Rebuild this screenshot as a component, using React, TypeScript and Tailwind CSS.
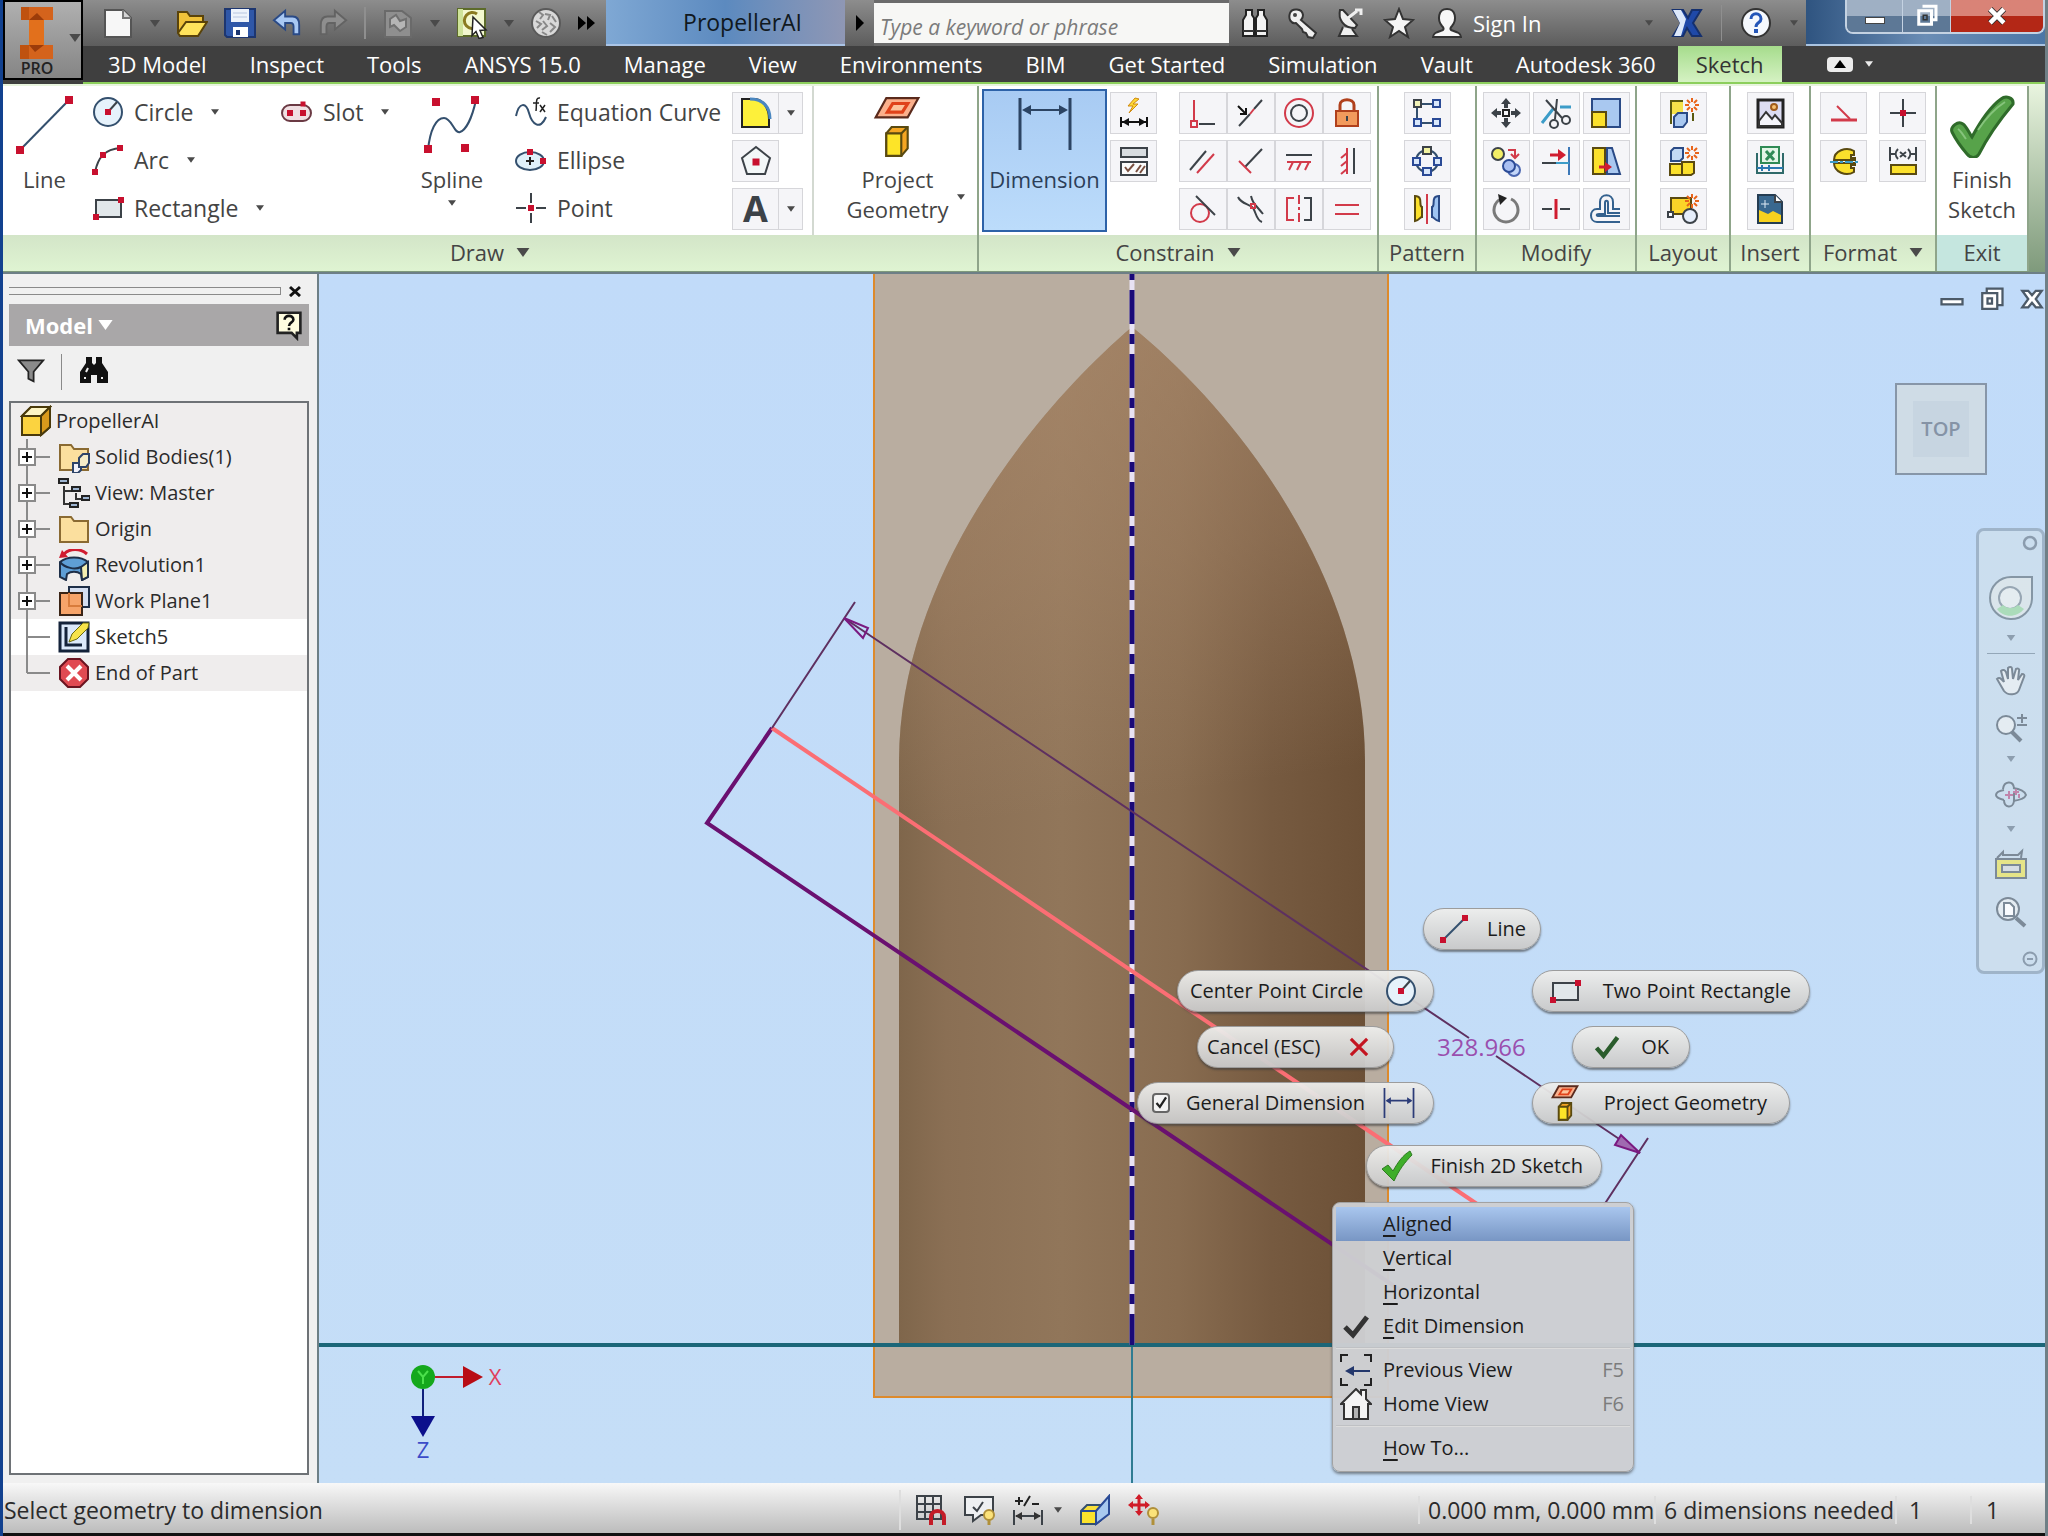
import { Fragment, type ReactNode } from 'react'
import clsx from 'clsx'

type IconProps = { className?: string; box?: string; children?: ReactNode }

function Icon({ className = 'w-8 h-8', box = '0 0 32 32', children }: IconProps) {
  return (
    <svg className={clsx('shrink-0', className)} viewBox={box} fill="none" stroke="#3c4248" strokeWidth="2" aria-hidden="true">
      {children}
    </svg>
  )
}

function Caret({ className = 'w-[10px] h-[7px]', color = '#4a4a4a' }: { className?: string; color?: string }) {
  return (
    <svg className={clsx('shrink-0', className)} viewBox="0 0 10 7" fill={color} aria-hidden="true">
      <path d="M0 0h10L5 7z" />
    </svg>
  )
}

// Small red handle used on most sketch icons
function Dot({ x, y, s = 6 }: { x: number; y: number; s?: number }) {
  return <rect x={x - s / 2} y={y - s / 2} width={s} height={s} fill="#c8102e" stroke="none" />
}

/* ---------- shared drawings ---------- */

const lineIcon = (
  <>
    <path d="M5 27L27 5" stroke="#34506e" />
    <Dot x={5} y={27} />
    <Dot x={27} y={5} />
  </>
)

const circleIcon = (
  <>
    <circle cx="16" cy="16" r="14" fill="#e6f2fb" stroke="#34506e" />
    <path d="M16 16L25 6" stroke="#3c4248" />
    <Dot x={16} y={16} />
  </>
)

const rectIcon = (
  <>
    <rect x="4" y="8" width="25" height="17" fill="#e1e7ea" />
    <Dot x={4} y={25} />
    <Dot x={29} y={8} />
  </>
)

const geometryIcon = (
  <>
    <path d="M12 2h30l-10 18H2z" fill="#fbb08c" stroke="#5a2a1c" />
    <path d="M18 7h14l-5 8H13z" fill="#fdc39b" stroke="#e0421a" strokeWidth="3" />
    <path d="M12 35l5-6h15v20l-6 7H12z" fill="#f5a623" stroke="#5a4a10" />
    <path d="M12 35h14v21H12z" fill="#fde428" stroke="#5a4a10" />
    <path d="M26 35l6-6" stroke="#5a4a10" />
  </>
)

const dimensionIcon = (
  <>
    <path d="M4 2v52M54 2v52" stroke="#2c4463" strokeWidth="3" />
    <path d="M8 14h42" stroke="#2c4463" strokeWidth="2" />
    <path d="M6 14l9-5v10zM52 14l-9-5v10z" fill="#2c4463" stroke="none" />
  </>
)

const sun = (
  <path
    d="M25 1v4M25 11v4M18 8h4M28 8h4M20 3l3 3M27 10l3 3M30 3l-3 3M23 10l-3 3"
    stroke="#e8641a"
    strokeWidth="2"
  />
)

/* ---------- title bar ---------- */

function QuickAccess() {
  return (
    <div className="flex items-center gap-4 pl-[19px] pr-[10px] bg-linear-to-b from-[#8d8d8d] to-[#5d5d5d]">
      <button aria-label="New">
        <Icon>
          <path d="M3 3h18l8 8v19H3z" fill="#f7f7f7" stroke="#555" />
          <path d="M21 3v8h8" fill="#d5d5d5" stroke="#777" />
        </Icon>
      </button>
      <Caret />
      <button aria-label="Open">
        <Icon>
          <path d="M2 26V5h9l3 4h13v5" fill="#f0c23a" stroke="#5a430a" />
          <path d="M2 26l8-11h21l-9 14H4z" fill="#ffe35c" stroke="#5a430a" />
        </Icon>
      </button>
      <button aria-label="Save">
        <Icon>
          <path d="M1 2h30v28H3l-2-2z" fill="#2f57a8" stroke="#1d3670" />
          <path d="M7 2h18v13H7z" fill="#eef3fb" stroke="none" />
          <path d="M9 6h14M9 10h14" stroke="#b8c6e0" strokeWidth="1" />
          <path d="M9 20h15v10H9z" fill="#fff" stroke="none" />
          <path d="M12 23h4v5h-4z" fill="#1d3670" stroke="none" />
        </Icon>
      </button>
      <button aria-label="Undo">
        <Icon className="w-[30px] h-8">
          <path d="M2 13L14 3v6h8c5 0 7 4 7 9v10h-6V20c0-2-1-4-3-4h-6v7z" fill="#a8c8f4" stroke="#2a4a86" />
        </Icon>
      </button>
      <button aria-label="Redo">
        <Icon className="w-[30px] h-8">
          <path d="M30 13L18 3v6h-8c-5 0-7 4-7 9v10h6V20c0-2 1-4 3-4h6v7z" fill="#8e8e8e" stroke="#636363" />
        </Icon>
      </button>
      <div className="w-[2px] h-8 bg-[#8f8f8f]" />
      <button aria-label="Update">
        <Icon>
          <path d="M3 4h17l9 7v19H3z" fill="#8f8f8f" stroke="#6a6a6a" />
          <path d="M8 12l6-4 4 6 6-2v8l-6 4-6-6-4 2z" fill="#b5b5b5" stroke="#707070" />
        </Icon>
      </button>
      <Caret />
      <button aria-label="Select">
        <Icon>
          <path d="M2 2h27v27H2z" fill="#f3f8cf" stroke="#5c6b2a" />
          <path d="M2 2h5v27H2z" fill="#cfe39a" stroke="none" />
          <path d="M21 7a8 8 0 1 0 0 13" stroke="#8a7a20" strokeWidth="3" />
          <path d="M17 10l13 13-6 .5 3 7-4 1-3-7-4 4z" fill="#fff" stroke="#222" strokeWidth="1.5" />
        </Icon>
      </button>
      <Caret />
      <button aria-label="Appearance">
        <Icon>
          <circle cx="16" cy="16" r="14" fill="#d9d9d9" stroke="#5a5a5a" />
          <path d="M9 5l4 3-3 4M15 7l5 1-2 5M22 9l4 6M6 14l5 3-4 4M13 14l4 5-5 4M20 16l5 4-5 5M12 25l5 3" stroke="#888" />
        </Icon>
      </button>
      <button aria-label="More">
        <svg className="w-[18px] h-4" viewBox="0 0 18 16" aria-hidden="true">
          <path d="M0 1l8 7-8 7zM9 1l8 7-8 7z" />
        </svg>
      </button>
    </div>
  )
}

function InfoCenter() {
  return (
    <div className="flex items-center gap-4 pl-[10px] pr-2 w-[577px] bg-linear-to-b from-[#8d8d8d] to-[#5d5d5d]">
      <button aria-label="Search">
        <Icon>
          <path d="M7 3h6v5l2 3v18H4V13l3-5zM19 3h6v5l3 5v16H17V11l2-3z" fill="#f2f2f2" stroke="#222" />
          <path d="M14 12h4v6h-4z" fill="#222" stroke="none" />
          <path d="M4 24h11M17 24h11" stroke="#333" />
        </Icon>
      </button>
      <button aria-label="Subscription">
        <Icon>
          <path d="M3 6c2-5 12-5 13 2 0 2-1 4-2 5l15 13-3 5-5-1-2-4-3-1-1-3-6-6C4 17 1 12 3 6z" fill="#f0f0f0" stroke="#333" />
          <circle cx="8" cy="8" r="2" fill="#444" stroke="none" />
        </Icon>
      </button>
      <button aria-label="Communication">
        <Icon>
          <path d="M5 3c-2 9 3 18 15 18l2-3L8 3z" fill="#f0f0f0" stroke="#333" />
          <path d="M13 11l9-7M20 3h6v5" stroke="#f0f0f0" strokeWidth="3" />
          <path d="M8 20l-4 9h18l-5-7" fill="#f0f0f0" stroke="#333" />
        </Icon>
      </button>
      <button aria-label="Favorites">
        <Icon>
          <path d="M16 2l4 10 10 1-8 7 3 10-9-6-9 6 3-10-8-7 10-1z" fill="#f5f5f5" stroke="#333" />
        </Icon>
      </button>
      <button className="flex items-center gap-[10px] text-white">
        <Icon>
          <path d="M2 30c0-4 4-5 10-7 1-1 0-3-1-4-5-6-4-17 5-17s10 11 5 17c-1 1-2 3-1 4 6 2 10 3 10 7z" fill="#f7f7f7" stroke="#333" />
        </Icon>
        Sign In
      </button>
      <div className="flex items-center gap-[18px] ml-auto">
        <Caret className="w-2 h-[6px]" />
        <button aria-label="Exchange">
          <Icon>
            <path d="M2 3h10l5 8 4-8h9l-8 13 8 13h-9l-5-8-4 8H2l8-13z" fill="#1f49a8" stroke="#15306e" />
            <path d="M2 3h8l5 9-5 17H3l6-13z" fill="#dce8fa" stroke="none" />
          </Icon>
        </button>
        <div className="w-px h-9 bg-[#8f8f8f]" />
        <button aria-label="Help">
          <Icon>
            <circle cx="16" cy="16" r="14" fill="#f5f8fd" stroke="#333" />
            <path d="M11 12c0-7 10-7 10 0 0 4-5 3-5 8" stroke="#2456b8" strokeWidth="3" />
            <path d="M14 22h4v4h-4z" fill="#2456b8" stroke="none" />
          </Icon>
        </button>
        <Caret className="w-2 h-[6px]" />
      </div>
    </div>
  )
}

function WindowButtons() {
  return (
    <div className="flex justify-end items-start w-[239px] border-b-2 border-[#a9c3e0] bg-linear-to-r from-[#2f5480] via-[#6a8db5] to-[#4c76a6]">
      <div className="flex h-[34px] rounded-b-lg border-2 border-t-0 border-[#c4d2e2] overflow-hidden">
        <button aria-label="Minimize" className="flex justify-center items-center w-14 bg-linear-to-b from-[#9fb0c4] from-50% to-[#5d7896] to-50% border-r border-[#c4d2e2]">
          <span className="w-5 h-[7px] mt-2 bg-white border border-[#444]" />
        </button>
        <button aria-label="Restore" className="flex justify-center items-center w-12 bg-linear-to-b from-[#9fb0c4] from-50% to-[#5d7896] to-50% border-r border-[#c4d2e2]">
          <Icon className="w-6 h-6">
            <path d="M10 3h18v18h-4" stroke="#fff" strokeWidth="4" />
            <path d="M5 9h17v18H5z" stroke="#fff" strokeWidth="4" />
            <path d="M11 15h5v6h-5z" stroke="#333" strokeWidth="2" />
          </Icon>
        </button>
        <button aria-label="Close" className="flex justify-center items-center w-[92px] bg-linear-to-b from-[#d98377] from-50% to-[#b32716] to-50%">
          <Icon className="w-5 h-5">
            <path d="M5 5l22 22M27 5L5 27" stroke="#333" strokeWidth="10" />
            <path d="M5 5l22 22M27 5L5 27" stroke="#fff" strokeWidth="7" />
          </Icon>
        </button>
      </div>
    </div>
  )
}

const tabs = [
  '3D Model', 'Inspect', 'Tools', 'ANSYS 15.0', 'Manage', 'View', 'Environments',
  'BIM', 'Get Started', 'Simulation', 'Vault', 'Autodesk 360',
]

function Header() {
  return (
    <header className="flex h-[84px] bg-[#3f3f3f]">
      <button aria-label="Application menu" className="flex w-20 h-20 border-2 border-black bg-linear-to-b from-[#b0b0b0] to-[#858585]">
        <span className="flex flex-col items-center w-[66px] h-full">
          <svg className="w-9 h-[54px] mt-1" viewBox="0 0 36 54" aria-hidden="true">
            <path d="M2 1h32v13H25v25h9v14H1V39h9V14H2z" fill="#d4631c" />
            <path d="M10 14h15v25H10z" fill="#e2701c" />
            <path d="M2 1h8v13H2zM1 39h9v14H1z" fill="#bf5210" />
            <path d="M10 14h15l-7-7zM10 39h15l-9 7z" fill="#9c3c0a" />
          </svg>
          <span className="text-base leading-4 font-semibold text-[#222]">PRO</span>
        </span>
        <Caret className="w-3 h-2 mt-8" />
      </button>
      <div className="flex-1 min-w-0">
        <div className="flex h-[46px]">
          <QuickAccess />
          <div className="flex items-center justify-end pr-[43px] w-[239px] border-b-2 border-[#aac4e6] bg-linear-to-r from-[#7fa8d4] via-[#5c8abf] to-[#8f97b4] text-[23px] text-[#101820]">
            PropellerAI
          </div>
          <button aria-label="Collapse search" className="flex justify-center items-center w-[29px] bg-linear-to-b from-[#8d8d8d] to-[#5d5d5d]">
            <svg className="w-2 h-4" viewBox="0 0 8 16" aria-hidden="true"><path d="M0 0l8 8-8 8z" /></svg>
          </button>
          <div className="flex-1 min-w-0 bg-[#6b6b6b] pt-[3px] pb-[3px]">
            <input
              type="text"
              aria-label="Search help"
              placeholder="Type a keyword or phrase"
              className="w-full h-10 px-[6px] pt-2 bg-[#f7f7f5] text-[21px] italic placeholder:text-[#7b7b7b]"
            />
          </div>
          <InfoCenter />
          <WindowButtons />
        </div>
        <nav className="flex items-center gap-px h-[38px] pl-1 border-b-2 border-[#8ccf5c] text-white">
          {tabs.map((t) => (
            <button key={t} className="px-[21px]">{t}</button>
          ))}
          <button className="self-stretch px-[18px] bg-linear-to-b from-[#a6dc8c] to-[#d5f2c3] text-[#333]">Sketch</button>
          <button aria-label="Minimize ribbon" className="flex items-center gap-3 ml-11">
            <span className="flex justify-center items-center w-[26px] h-[15px] rounded-sm bg-[#ececec]">
              <svg className="w-3 h-2" viewBox="0 0 12 8" aria-hidden="true"><path d="M6 0l6 8H0z" /></svg>
            </span>
            <Caret className="w-2 h-[6px]" color="#ececec" />
          </button>
        </nav>
      </div>
    </header>
  )
}

/* ---------- ribbon ---------- */

type GroupProps = { label: string; caret?: boolean; className?: string; exit?: boolean; children: ReactNode }

function Group({ label, caret, className, exit, children }: GroupProps) {
  return (
    <section className={clsx('flex flex-col border-r-2 border-[#8fa58a]', className)}>
      <div className="flex h-[149px] bg-white">{children}</div>
      <div
        className={clsx(
          'flex justify-center items-center gap-3 h-9 pb-[2px]',
          exit ? 'bg-[#c5e6df]' : 'bg-linear-to-b from-[#d3e5c8] to-[#dff4d2]',
        )}
      >
        {label}
        {caret && <Caret className="w-[14px] h-[9px]" />}
      </div>
    </section>
  )
}

function Tool({ name, children, wide }: { name: string; children: ReactNode; wide?: boolean }) {
  return (
    <button
      aria-label={name}
      className={clsx('flex justify-center items-center h-[42px] border border-[#d6d6da] bg-[#f5f5f8]', wide ? 'w-12' : 'w-[47px]')}
    >
      {children}
    </button>
  )
}

function CaretTool({ name }: { name: string }) {
  return (
    <button aria-label={name} className="flex justify-center items-center w-6 h-[42px] border border-l-0 border-[#d6d6da] bg-[#f5f5f8]">
      <Caret className="w-2 h-[6px]" />
    </button>
  )
}

function RowTool({ label, caret, children }: { label: string; caret?: boolean; children: ReactNode }) {
  return (
    <button className="flex items-center h-12 text-[23px]">
      {children}
      <span className="ml-[10px]">{label}</span>
      {caret && <Caret className="w-2 h-[6px] ml-[18px]" />}
    </button>
  )
}

const constraints: [string, ReactNode][] = [
  ['Coincident', <><path d="M7 3v22" stroke="#d23a4a" /><path d="M12 27h16" /><path d="M4 24h6v6H4z" stroke="#d23a4a" /></>],
  ['Collinear', <><path d="M4 29L15 17M19 12l8-9" /><path d="M15 17l4-5" stroke="#d23a4a" /><path d="M3 9l8 8M11 11v6H5" stroke="#111" /></>],
  ['Concentric', <><circle cx="16" cy="16" r="14" stroke="#d23a4a" /><circle cx="16" cy="16" r="8" /></>],
  ['Fix', <><path d="M5 14h22v15H5z" fill="#f29a5c" stroke="#b0401c" /><path d="M9 14V8c0-7 14-7 14 0v6" stroke="#b0401c" strokeWidth="3" /><path d="M16 19v5" /></>],
  ['Parallel', <><path d="M3 25L19 6" /><path d="M10 28L27 9" stroke="#d23a4a" /></>],
  ['Perpendicular', <><path d="M10 22L27 4" /><path d="M4 16l12 12" stroke="#d23a4a" /></>],
  ['Horizontal', <><path d="M3 10h26" /><path d="M4 17h24M10 17l-4 8M18 17l-4 8M26 17l-4 8" stroke="#d23a4a" /></>],
  ['Vertical', <><path d="M23 3v26" /><path d="M16 3v26M16 8l-6 5M16 16l-6 5M16 24l-6 5" stroke="#d23a4a" /></>],
  ['Tangent', <><circle cx="13" cy="20" r="9" stroke="#d23a4a" /><path d="M9 3l19 19" /></>],
  ['Smooth', <><path d="M3 4c3 7 12 7 15 11s3 12 9 14M16 3c2 8 4 8 12 18" /><path d="M16 11h4v4h-4z" stroke="#d23a4a" /></>],
  ['Symmetric', <><path d="M11 5H4v22h7" stroke="#d23a4a" /><path d="M16 2v28" stroke="#d23a4a" strokeDasharray="9 3 3 3" /><path d="M21 5h7v22h-7" /></>],
  ['Equal', <><path d="M4 12h24M4 21h24" stroke="#d23a4a" /></>],
]

const patterns: [string, ReactNode][] = [
  ['Rectangular pattern', <><path d="M10 7h12M10 26h12M6 11v11" stroke="#34506e" /><path d="M3 3h7v7H3z" fill="#f1f2b8" /><path d="M22 3h7v7h-7zM3 22h7v7H3zM22 22h7v7h-7z" fill="#d9e8fb" stroke="#2a4a96" /></>],
  ['Circular pattern', <><circle cx="16" cy="16" r="11" stroke="#34506e" /><path d="M12 2h8v7h-8z" fill="#f1f2a0" /><path d="M2 13h7v7H2zM23 13h7v7h-7zM12 23h8v7h-8z" fill="#d9e8fb" stroke="#2a4a96" /></>],
  ['Mirror', <><path d="M4 3c9 0 3 10 7 11v10c-2 0-2 3-7 4z" fill="#fbe02c" stroke="#5a4a10" /><path d="M28 3c-9 0-3 10-7 11v10c2 0 2 3 7 4z" fill="#9fc4f2" stroke="#2a4a86" /><path d="M16 1v30" stroke="#d23a4a" /></>],
]

const modify: [string, ReactNode][] = [
  ['Move', <><path d="M13 13h6v6h-6z" stroke="#222" /><path d="M16 1l5 6h-3v4h-4V7h-3zM16 31l5-6h-3v-4h-4v4h-3zM1 16l6-5v3h4v4H7v3zM31 16l-6-5v3h-4v4h4v3z" fill="#3c4248" stroke="none" /></>],
  ['Trim', <><path d="M2 26L13 12M20 10h11" stroke="#3c9cc8" strokeWidth="3" /><path d="M6 3l16 18M17 2l-2 20" /><circle cx="14" cy="27" r="4" /><circle cx="26" cy="23" r="4" /></>],
  ['Scale', <><path d="M2 14V2h28v28H17" fill="#a9c8f0" stroke="#2a4a86" /><path d="M2 15h14v15H2z" fill="#fbe02c" stroke="#5a4a10" /></>],
  ['Copy', <><circle cx="8" cy="9" r="6" fill="#f3ee66" /><circle cx="24" cy="25" r="6" fill="#c3d6f8" stroke="#4a66b0" /><circle cx="19" cy="21" r="6" fill="#a9bff2" stroke="#2a4a96" /><path d="M18 5h7v7M21 9l4 4 4-4" stroke="#d23a4a" /></>],
  ['Extend', <><path d="M29 2v28" stroke="#3c78b8" /><path d="M2 18h14" /><path d="M16 18h13" stroke="#3c9cc8" /><path d="M10 10h10" stroke="#d01c30" strokeWidth="3" /><path d="M18 4l8 6-8 6z" fill="#d01c30" stroke="none" /></>],
  ['Stretch', <><path d="M3 3h12v26H3z" fill="#fbe02c" stroke="#5a4a10" /><path d="M17 3h5l8 26H17z" fill="#a9c8f0" stroke="#2a4a86" /><path d="M9 22h8" stroke="#d01c30" strokeWidth="3" /><path d="M15 17l7 5-7 5z" fill="#d01c30" stroke="none" /></>],
  ['Rotate', <><path d="M21 6A12 12 0 1 1 11 6" strokeWidth="3" stroke="#7a7a7a" /><path d="M8 1l9 4-7 7z" fill="#222" stroke="none" /></>],
  ['Split', <><path d="M2 16h10M20 16h10" /><path d="M16 6v20" stroke="#d01c30" strokeWidth="3" /></>],
  ['Offset', <><path d="M30 29H7c-8 0-8-13 0-13h3V9c0-9 13-9 13 0v7h7" stroke="#34618e" /><path d="M30 23H9c-3 0-3-2 0-2h6V10c0-3 3-3 3 0v10h12" stroke="#34618e" /></>],
]

const layout: [string, ReactNode][] = [
  ['Make part', <><path d="M4 27V4h12M26 16v8" stroke="#5a5a10" /><path d="M5 5h11v12H5z" fill="#f5e24a" stroke="none" /><path d="M7 20l4-4h9v9l-4 5H7z" fill="#a9c8f0" stroke="#2a4a86" />{sun}</>],
  ['Make components', <><path d="M4 6l3-3h9v10l-3 3H4z" fill="#c3d9f5" stroke="#2a4a86" /><path d="M3 19h12v11H3zM15 17h12v11l-3 2h-9z" fill="#fbe02c" stroke="#5a4a10" />{sun}</>],
  ['Create block', <><path d="M4 5h20v16H4z" fill="#fbd428" stroke="#5a4a10" /><circle cx="23" cy="23" r="7" fill="#e6eefb" /><path d="M1 19h5v5H1z" fill="#fff" />{sun}</>],
]

const insert: [string, ReactNode][] = [
  ['Image', <><path d="M4 3h25v27H4z" fill="#dcdcf2" stroke="#222" strokeWidth="3" /><circle cx="20" cy="10" r="3" fill="#f8c070" stroke="#a05c1c" /><path d="M5 24l7-9 6 7 3-4 7 8v3H5z" fill="#f5f5fb" stroke="#333" /></>],
  ['Points', <><path d="M3 8v20h26V8" stroke="#2f6a6a" /><path d="M7 2h18v16H7z" fill="#e2f5e6" stroke="#2f8a55" /><path d="M12 6l8 9M20 6l-8 9" stroke="#2f8a55" strokeWidth="3" /><path d="M3 23h26M8 20v6M15 20v6" stroke="#2a78b0" /></>],
  ['ACAD', <><path d="M4 2h17l7 7v21H4z" fill="#39688f" stroke="#243c52" /><path d="M5 17l9 4 5-3 8 4v7H5z" fill="#f7d11e" stroke="none" /><path d="M21 2v7h7" fill="#fff" /><path d="M11 7v8M7 11h8" stroke="#dfeaf5" strokeWidth="1" /></>],
]

const format: [string, ReactNode][] = [
  ['Construction', <><path d="M3 23h26" stroke="#d23a4a" strokeWidth="3" /><path d="M9 9l13 13" stroke="#d23a4a" /></>],
  ['Center point', <><path d="M16 2v28M3 16h26" /><Dot x={16} y={16} /></>],
  ['Centerline', <><path d="M6 15c0-9 12-14 20-9v4h-3v3h4v2zM6 18c0 9 12 14 20 9v-4h-3v-3h4v-2z" fill="#fbe02c" stroke="#5a4a10" /><path d="M2 17h28" stroke="#3c9cc8" strokeDasharray="8 2 3 2" /></>],
  ['Driven dimension', <><path d="M3 2v14M29 2v14M3 9h5M24 9h5M11 4c-3 3-3 7 0 10M21 4c3 3 3 7 0 10M13 7l6 5M19 7l-6 5" /><path d="M4 20h25v9H4z" fill="#fbe02c" stroke="#5a4a10" /></>],
]

function ToolGrid({ items, className, wide }: { items: [string, ReactNode][]; className?: string; wide?: boolean }) {
  return (
    <div className={clsx('grid gap-y-[6px] content-start pt-[6px]', className)}>
      {items.map(([name, art]) => (
        <Tool key={name} name={name} wide={wide}><Icon>{art}</Icon></Tool>
      ))}
    </div>
  )
}

function Ribbon() {
  return (
    <div className="flex items-start h-[190px] pt-[2px] bg-linear-to-b from-[#e9f5df] to-[#7f9a7c] border-b-2 border-[#6d7f86] leading-[30px]">
      <Group label="Draw" caret className="flex-1">
        <div className="flex flex-1">
          <button className="flex flex-col items-center w-[83px] pt-[6px]">
            <Icon className="w-[66px] h-[66px]" box="0 0 66 66">
              <path d="M8 58L57 8" stroke="#34506e" />
              <Dot x={8} y={58} s={8} /><Dot x={57} y={8} s={8} />
            </Icon>
            <span className="mt-[6px]">Line</span>
          </button>
          <div className="w-[190px] pl-[6px] pt-[2px]">
            <RowTool label="Circle" caret><Icon>{circleIcon}</Icon></RowTool>
            <RowTool label="Arc" caret>
              <Icon>
                <path d="M3 28C6 14 12 5 29 4" />
                <Dot x={3} y={28} /><Dot x={11} y={11} /><Dot x={28} y={4} />
              </Icon>
            </RowTool>
            <RowTool label="Rectangle" caret><Icon>{rectIcon}</Icon></RowTool>
          </div>
          <div className="w-[130px] pl-[5px] pt-[2px]">
            <RowTool label="Slot" caret>
              <Icon>
                <rect x="1" y="9" width="29" height="16" rx="8" fill="#f0dfe2" stroke="#6b3a44" />
                <Dot x={9} y={17} /><Dot x={22} y={17} /><Dot x={22} y={8} s={5} />
              </Icon>
            </RowTool>
          </div>
          <button className="flex flex-col items-center w-[92px] pt-[6px]">
            <Icon className="w-[60px] h-[66px]" box="0 0 60 66">
              <path d="M6 58C8 38 14 26 22 26S32 42 38 40 50 26 54 8" stroke="#34506e" />
              <Dot x={6} y={57} s={8} /><Dot x={14} y={10} s={8} /><Dot x={43} y={56} s={8} /><Dot x={53} y={8} s={8} />
            </Icon>
            <span className="mt-[6px]">Spline</span>
            <Caret className="w-2 h-[6px] mt-[6px]" />
          </button>
          <div className="w-[234px] pl-[17px] pt-[2px]">
            <RowTool label="Equation Curve">
              <Icon>
                <path d="M1 20C4 6 11 6 14 17s11 18 17 4" stroke="#34506e" />
                <path d="M25 2c-5-1-3 6-4 13M18 7h6M25 9l5 7M30 9l-5 7" stroke="#222" strokeWidth="1.5" />
              </Icon>
            </RowTool>
            <RowTool label="Ellipse">
              <Icon>
                <ellipse cx="15" cy="17" rx="14" ry="9" fill="#dff0fa" stroke="#34506e" />
                <path d="M15 13v8M11 17h8" stroke="#222" />
                <Dot x={15} y={8} /><Dot x={28} y={17} />
              </Icon>
            </RowTool>
            <RowTool label="Point">
              <Icon>
                <path d="M16 1v10M16 21v10M1 16h10M21 16h10" /><Dot x={16} y={16} />
              </Icon>
            </RowTool>
          </div>
          <div className="flex flex-col gap-[6px] w-20 pt-[6px]">
            <div className="flex">
              <Tool name="Fillet">
                <Icon>
                  <path d="M2 2h12c9 0 15 9 15 20v8H2z" fill="#fdf03a" stroke="#222" />
                  <path d="M10 2c14 0 20 9 20 20" stroke="#4a86c0" strokeWidth="3" />
                </Icon>
              </Tool>
              <CaretTool name="Fillet options" />
            </div>
            <Tool name="Polygon">
              <Icon>
                <path d="M16 2l14 11-5 16H7L2 13z" fill="#f3f7f8" />
                <Dot x={16} y={17} s={7} />
              </Icon>
            </Tool>
            <div className="flex">
              <Tool name="Text"><span className="text-4xl leading-9 font-bold text-[#3c4248]">A</span></Tool>
              <CaretTool name="Text options" />
            </div>
          </div>
          <button className="flex flex-1 justify-center items-start pt-[10px] border-l-2 border-[#d3d9d1]">
            <span className="flex flex-col items-center pl-5">
              <svg className="w-[54px] h-[62px]" viewBox="0 0 44 58" fill="none" strokeWidth="2" aria-hidden="true">{geometryIcon}</svg>
              <span className="mt-[6px]">Project</span>
              <span>Geometry</span>
            </span>
            <Caret className="w-2 h-[6px] mt-[98px] ml-2" />
          </button>
        </div>
      </Group>

      <Group label="Constrain" caret className="w-[400px]">
        <button className="flex flex-col items-center w-[125px] h-[143px] mt-[3px] ml-[3px] border-2 border-[#2d62a8] bg-linear-to-b from-[#a8cbf3] to-[#bcdcfb] text-[#2c3e58]">
          <Icon className="w-[62px] h-[58px] mt-1" box="-2 0 62 56">{dimensionIcon}</Icon>
          <span className="mt-[11px]">Dimension</span>
        </button>
        <div className="flex flex-col gap-[6px] ml-[3px] pt-[6px]">
          <Tool name="Automatic dimensions">
            <Icon>
              <path d="M17 1l-7 8h5l-4 7 9-9h-5l6-5z" fill="#fdd835" stroke="#d08a10" strokeWidth="1" />
              <path d="M3 20v10M29 20v10M4 25h24" stroke="#111" />
              <path d="M4 25l7-4v8zM28 25l-7-4v8z" fill="#111" stroke="none" />
            </Icon>
          </Tool>
          <Tool name="Show constraints">
            <Icon>
              <path d="M3 3h26v9H3z" fill="#d8dce0" />
              <path d="M3 17h26v13H3z" fill="#fbfbfb" />
              <path d="M7 22l3 4 6-7M18 27l5-7M22 28l5-7" stroke="#7a5040" />
            </Icon>
          </Tool>
        </div>
        <ToolGrid items={constraints} wide className="grid-cols-4 ml-[22px]" />
      </Group>

      <Group label="Pattern" className="w-[98px]">
        <ToolGrid items={patterns} className="grid-cols-1 mx-auto" />
      </Group>
      <Group label="Modify" className="w-[160px]">
        <ToolGrid items={modify} className="grid-cols-3 gap-x-[3px] mx-auto" />
      </Group>
      <Group label="Layout" className="w-[94px]">
        <ToolGrid items={layout} className="grid-cols-1 mx-auto" />
      </Group>
      <Group label="Insert" className="w-20">
        <ToolGrid items={insert} className="grid-cols-1 mx-auto" />
      </Group>
      <Group label="Format" caret className="w-[126px]">
        <ToolGrid items={format} className="grid-cols-2 gap-x-3 mx-auto" />
      </Group>
      <Group label="Exit" exit className="w-[92px]">
        <button className="flex flex-col items-center w-full pt-2">
          <Icon className="w-[68px] h-16" box="0 0 68 64">
            <path d="M4 38c-2-5 6-12 11-8 4 3 6 9 9 13C32 28 42 13 53 5c5-4 13-1 12 5C55 22 40 42 31 60c-3 5-9 4-12 0C13 53 8 46 4 38z" fill="#57a34a" stroke="#2f6b2a" strokeWidth="3" />
            <path d="M10 35c3 2 5 6 8 10M30 36C38 24 46 15 57 8" stroke="#86c47c" strokeWidth="2" />
          </Icon>
          <span className="mt-[6px]">Finish</span>
          <span>Sketch</span>
        </button>
      </Group>
      <div className="w-4" />
    </div>
  )
}

/* ---------- model browser ---------- */

const folder = <path d="M2 29V4h11l3 4h14v21z" fill="#fbdf9e" stroke="#8a6a32" />

const nodes: { label: string; expandable?: boolean; current?: boolean; art: ReactNode }[] = [
  { label: 'Solid Bodies(1)', expandable: true, art: <>{folder}<path d="M15 22h8v7l-3 3h-5z" fill="#f1f1fa" stroke="#2e4468" /><path d="M21 17l4-4h6v9l-3 4h-7z" fill="#f6edc8" stroke="#2e4468" /></> },
  { label: 'View: Master', expandable: true, art: <><path d="M6 9v18h5M6 14h7M18 16v6h5" stroke="#333" /><path d="M1 2h9v4H1zM14 10h8v4h-8zM24 19h8v4h-8zM12 26h8v4h-8z" fill="#9db4d0" stroke="#222" /></> },
  { label: 'Origin', expandable: true, art: folder },
  { label: 'Revolution1', expandable: true, art: <><path d="M2 13c7-6 21-6 28 0v15l-6 3-1-6c-4-3-10-3-14 0l-1 6-6-3z" fill="#5f9fd6" stroke="#1e2f48" /><path d="M23 18l7-5v15l-6 3z" fill="#f4eeb0" stroke="#1e2f48" /><path d="M2 13c5 6 15 8 21 5" stroke="#1e2f48" /><path d="M29 5C22-1 12-1 6 5" stroke="#d01c30" strokeWidth="3" /><path d="M1 9l3-8 6 7z" fill="#d01c30" stroke="none" /></> },
  { label: 'Work Plane1', expandable: true, art: <><path d="M11 2h20v20H11z" fill="#d4def0" stroke="#1e2f48" /><path d="M2 8h22v22H2z" fill="#f6a46a" stroke="#3a2416" /><path d="M11 8v13h13" stroke="#d87c3c" /></> },
  { label: 'Sketch5', current: true, art: <><path d="M2 2h28v28H2z" fill="#dbe9fa" stroke="#14233a" strokeWidth="3" /><path d="M8 6v18h16" stroke="#14233a" strokeWidth="3" /><path d="M11 21l3-8L25 2h6l-1 5-11 11z" fill="#f7e34a" stroke="#6a6a10" strokeWidth="1" /></> },
  { label: 'End of Part', art: <><path d="M10 2h12l8 8v12l-8 8H10l-8-8V10z" fill="#e04a52" stroke="#6a1420" /><path d="M9 9l14 14M23 9L9 23" stroke="#fff" strokeWidth="4" /></> },
]

function Browser() {
  return (
    <aside className="flex flex-col w-[316px] px-2 pl-[6px] pb-2 bg-[#f0f0f0] border-r-2 border-[#6d7f86] text-xl text-[#2b2b2b]">
      <div className="flex items-center h-[30px]">
        <div className="flex-1 h-2 mt-[3px] border-y border-r border-[#8a8a8a]" />
        <button aria-label="Close browser" className="flex justify-center w-7 mt-[3px]">
          <Icon className="w-3 h-3" box="0 0 12 12"><path d="M1 2l10 9M11 2L1 11" stroke="#111" strokeWidth="3" /></Icon>
        </button>
      </div>
      <div className="flex items-center justify-between h-[42px] pl-4 pr-[6px] bg-[#a9a7a8]">
        <button className="flex items-center gap-1 font-bold text-white text-[22px]">
          Model
          <Caret className="w-[17px] h-[10px]" color="#fff" />
        </button>
        <button aria-label="Help">
          <Icon className="w-7 h-8">
            <path d="M3 2h26v23h-4v6l-6-6H3z" fill="#fffde0" stroke="#222" strokeWidth="3" />
            <path d="M11 10c0-6 10-6 10 0 0 3-5 3-5 7M16 19v3" stroke="#111" strokeWidth="3" />
          </Icon>
        </button>
      </div>
      <div className="flex items-center gap-4 h-[55px] pl-2">
        <button aria-label="Filter" className="-mt-2">
          <Icon className="w-7 h-7"><path d="M2 5h28L19 18v11l-6-3v-8z" fill="#8a8a8a" stroke="#222" /></Icon>
        </button>
        <div className="w-px h-9 -mt-1 bg-[#8a8a8a]" />
        <button aria-label="Find" className="-mt-2">
          <Icon className="w-8 h-8">
            <path d="M8 3h6v6l2 2 2-2V3h6v6l6 9v11H19v-8h-6v8H2V18l6-9z" fill="#111" stroke="none" />
            <path d="M6 24h2M23 24h2M10 14l-2 4" stroke="#eee" />
          </Icon>
        </button>
      </div>
      <div className="flex-1 border-2 border-[#6e7276] bg-white">
        <div className="flex items-center gap-1 h-9 pl-[9px] bg-[#efeded] leading-9">
          <Icon>
            <path d="M2 11L11 2h19v20l-9 8H2z" fill="#fbd340" stroke="#4a3a0a" />
            <path d="M2 11h19l9-9H11z" fill="#fdf5c4" stroke="#4a3a0a" />
            <path d="M21 11v19l9-8V2z" fill="#d99a1c" stroke="#4a3a0a" />
          </Icon>
          PropellerAI
        </div>
        <ul>
          {nodes.map((n, i) => (
            <li key={n.label} className={clsx('flex items-center h-9 pl-[7px] leading-9', n.current ? 'bg-white' : 'bg-[#efeded]')}>
              <svg className="w-8 h-9 mr-2 shrink-0" viewBox="0 0 32 36" fill="none" stroke="#8a8a8a" strokeWidth="2" aria-hidden="true">
                <path d={i === nodes.length - 1 ? 'M9 0v18' : 'M9 0v36'} />
                <path d="M9 18h23" />
                {n.expandable && (
                  <>
                    <rect x="1" y="10" width="16" height="16" fill="#fff" />
                    <path d="M4 18h10M9 13v10" stroke="#111" />
                  </>
                )}
              </svg>
              <Icon>{n.art}</Icon>
              <span className="ml-[5px]">{n.label}</span>
            </li>
          ))}
        </ul>
      </div>
    </aside>
  )
}

/* ---------- graphics window ---------- */

function Scene() {
  return (
    <svg className="block w-full h-full" viewBox="319 273 1726 1209" preserveAspectRatio="xMinYMin slice" fill="none" role="img" aria-label="PropellerAI model">
      <defs>
        <linearGradient id="body" x1="899" x2="1365" y1="0" y2="0" gradientUnits="userSpaceOnUse">
          <stop offset="0" stopColor="#7f664b" />
          <stop offset=".1" stopColor="#8a6f54" />
          <stop offset=".35" stopColor="#91765a" />
          <stop offset=".6" stopColor="#886c50" />
          <stop offset=".8" stopColor="#765a40" />
          <stop offset="1" stopColor="#6c5036" />
        </linearGradient>
        <linearGradient id="shine" x1="1050" x2="1120" y1="325" y2="800" gradientUnits="userSpaceOnUse">
          <stop offset="0" stopColor="#b08e70" stopOpacity=".6" />
          <stop offset=".5" stopColor="#b08e70" stopOpacity=".35" />
          <stop offset="1" stopColor="#b08e70" stopOpacity="0" />
        </linearGradient>
      </defs>
      <rect x="874" y="260" width="514" height="1136" fill="#b9ada0" stroke="#dd8a2c" strokeWidth="2" />
      <path d="M1132 326C1030 413 899 580 899 760V1344H1365V760C1365 580 1240 413 1132 326Z" fill="url(#body)" />
      <path d="M1132 326C1030 413 899 580 899 760V1344H1365V760C1365 580 1240 413 1132 326Z" fill="url(#shine)" />
      <path d="M318 1344H2045" stroke="#1b6678" strokeWidth="4" />
      <path d="M1132 1346V1483" stroke="#2f7c92" strokeWidth="2" />
      <path d="M1132 272V1344" stroke="#e8e2f4" strokeWidth="5" />
      <path d="M1132 225V1344" stroke="#1a0a78" strokeWidth="5" strokeDasharray="34 10 10 10" />

      <path d="M772 727L707 822L1400 1289" stroke="#6a1070" strokeWidth="4" />
      <path d="M772 727L1477 1203" stroke="#fb6e74" strokeWidth="4" />
      <path d="M772 727L855 601M844 617L1469 1037M1496 1055L1640 1152M1648 1137L1604 1204" stroke="#5e3060" strokeWidth="2" />
      <path d="M844 617L863 637L868 627Z" stroke="#7a1a80" strokeWidth="2" />
      <path d="M1640 1152L1615 1144L1621 1134Z" fill="#a06ab0" stroke="#7a1a80" strokeWidth="2" />

      <path d="M435 1376h30" stroke="#c01c2c" strokeWidth="2" />
      <path d="M463 1365v22l20-11z" fill="#b80c14" />
      <path d="M423 1388v28" stroke="#10207c" strokeWidth="2" />
      <path d="M411 1415h24l-12 21z" fill="#0c108c" />
      <circle cx="423" cy="1376" r="12" fill="#14a81c" />
      <path d="M418 1370l5 6 5-6M423 1376v7" stroke="#4ce04c" strokeWidth="2" />
      <text x="495" y="1384" textAnchor="middle" fontSize="22" fill="#e0405c">X</text>
      <text x="423" y="1457" textAnchor="middle" fontSize="22" fill="#3c4cc8">Z</text>
    </svg>
  )
}

function Pill({ className, children }: { className: string; children: ReactNode }) {
  return (
    <button className={clsx('absolute flex items-center h-[42px] px-3 rounded-full border border-[#9c9c9c] bg-linear-to-b from-[#eeeeec]/95 to-[#c9c9c9]/95 shadow-[0_2px_2px_rgba(60,60,60,0.6)] whitespace-nowrap', className)}>
      {children}
    </button>
  )
}

function MarkingMenu() {
  return (
    <div className="text-[#1c1c1c]">
      <Pill className="left-[1104px] top-[634px] w-[118px] justify-between px-[14px]">
        <Icon>{lineIcon}</Icon>Line
      </Pill>
      <Pill className="left-[858px] top-[696px] w-[257px] justify-between pr-4">
        Center Point Circle<Icon>{circleIcon}</Icon>
      </Pill>
      <Pill className="left-[1213px] top-[696px] w-[278px] justify-between pl-[16px] pr-[18px]">
        <Icon>{rectIcon}</Icon>Two Point Rectangle
      </Pill>
      <Pill className="left-[878px] top-[752px] w-[197px] justify-between pl-[9px] pr-6">
        Cancel (ESC)
        <Icon className="w-5 h-5"><path d="M3 3l26 26M29 3L3 29" stroke="#c41420" strokeWidth="5" /></Icon>
      </Pill>
      <span className="absolute left-[1118px] top-[758px] leading-[30px] text-2xl text-[#9a4fae]">328.966</span>
      <Pill className="left-[1253px] top-[752px] w-[118px] justify-between px-5">
        <Icon className="w-7 h-7"><path d="M4 17l8 9L28 5" stroke="#2a5c2c" strokeWidth="5" /></Icon>OK
      </Pill>
      <div className="absolute left-[818px] top-[808px] flex items-center justify-between w-[297px] h-[42px] pl-[14px] pr-4 rounded-full border border-[#9c9c9c] bg-linear-to-b from-[#eeeeec]/95 to-[#c9c9c9]/95 shadow-[0_2px_2px_rgba(60,60,60,0.6)]">
        <span className="relative flex">
          <input id="general-dimension" type="checkbox" defaultChecked className="appearance-none w-[18px] h-5 rounded-sm border-2 border-[#666] bg-[#f4f4f4]" />
          <Icon className="absolute inset-0 w-[18px] h-5 pointer-events-none"><path d="M8 16l6 7L25 6" stroke="#222" strokeWidth="4" /></Icon>
        </span>
        <label htmlFor="general-dimension">General Dimension</label>
        <Icon className="w-9 h-9" box="-2 0 62 56">
          <path d="M4 2v52M54 2v52M8 24h42" stroke="#2c3c78" strokeWidth="3" />
          <path d="M6 24l9-6v12zM52 24l-9-6v12z" fill="#2c3c78" stroke="none" />
        </Icon>
      </div>
      <Pill className="left-[1213px] top-[808px] w-[258px] justify-between pl-4 pr-[22px]">
        <svg className="w-8 h-9" viewBox="0 0 44 58" fill="none" strokeWidth="3" aria-hidden="true">{geometryIcon}</svg>
        Project Geometry
      </Pill>
      <Pill className="left-[1047px] top-[871px] w-[236px] justify-between pl-[14px] pr-[18px]">
        <Icon>
          <path d="M1 19l6-4 5 6C17 12 22 5 29 1l2 4C24 12 18 20 13 31z" fill="#3fae2a" stroke="#2f7a22" strokeWidth="1" />
        </Icon>
        Finish 2D Sketch
      </Pill>
    </div>
  )
}

const menu: { mark?: string; rest: string; keys?: string; active?: boolean; split?: boolean; art?: ReactNode }[] = [
  { mark: 'A', rest: 'ligned', active: true },
  { mark: 'V', rest: 'ertical' },
  { mark: 'H', rest: 'orizontal' },
  { mark: 'E', rest: 'dit Dimension', art: <path d="M5 17l8 8L27 7" stroke="#333" strokeWidth="5" /> },
  { rest: 'Previous View', keys: 'F5', split: true, art: <><path d="M1 8V1h7M24 1h7v7M31 24v7h-7M8 31H1v-7" stroke="#222" /><path d="M8 17h22" stroke="#24386c" /><path d="M5 17l9-5v10z" fill="#24386c" stroke="none" /></> },
  { rest: 'Home View', keys: 'F6', art: <><path d="M4 31V16h-3L16 1l5 5V2h5v9l5 5h-3v15z" fill="#f4f4f4" stroke="#333" /><path d="M13 31V19h6v12z" fill="#b4b4b4" stroke="#333" /></> },
  { mark: 'H', rest: 'ow To...', split: true },
]

function ContextMenu() {
  return (
    <div role="menu" className="absolute left-[1013px] top-[928px] w-[302px] pt-1 pb-[6px] px-[3px] rounded-lg border border-[#a2a2a2] bg-[#cdced2]/97 shadow-[0_2px_3px_rgba(60,60,60,0.6)] text-[#1c1c1c]">
      {menu.map((m) => (
        <Fragment key={m.rest}>
          {m.split && <div className="h-[2px] my-[4px] bg-[#bfc1c4] border-b border-[#dcdcdc]" />}
          <button
            role="menuitem"
            className={clsx('flex items-center w-full h-[34px] pl-1 pr-[6px]', m.active && 'bg-linear-to-b from-[#a9c6ee] to-[#7896c4]')}
          >
            <span className="w-[43px]">{m.art && <Icon>{m.art}</Icon>}</span>
            <span className="flex-1 text-left">{m.mark && <u className="underline-offset-4">{m.mark}</u>}{m.rest}</span>
            {m.keys && <span className="text-[#7c7c7c]">{m.keys}</span>}
          </button>
        </Fragment>
      ))}
    </div>
  )
}

function NavigationBar() {
  return (
    <div className="absolute right-0 top-[254px] flex flex-col items-center w-[69px] h-[446px] rounded-lg border-[3px] border-[#9cb0c4] bg-[#cddfee] opacity-90">
      <button aria-label="Close navigation bar" className="self-end mt-1 mr-1">
        <Icon className="w-4 h-4"><circle cx="16" cy="16" r="12" stroke="#8696a6" strokeWidth="5" /></Icon>
      </button>
      <button aria-label="Steering wheel" className="mt-6">
        <Icon className="w-12 h-12" box="0 0 48 48">
          <path d="M24 2h21v22A21 21 0 1 1 24 2z" fill="#dde6ea" stroke="#7f8f9c" />
          <circle cx="23" cy="23" r="11" fill="#e8eef0" stroke="#93a1ac" />
          <path d="M10 34c6 9 20 9 27 0l-6-4c-4 4-11 4-15 0z" fill="#a9dcb4" stroke="none" />
        </Icon>
      </button>
      <Caret className="w-3 h-[6px] mt-3" color="#8898a8" />
      <div className="w-12 h-px mt-3 bg-[#8fa2b2]" />
      <button aria-label="Pan" className="mt-[10px]">
        <Icon>
          <path d="M9 27L2 15c2-2 4-1 7 3L6 7c2-2 4-1 5 1l2 7 0-11c2-2 4-1 4 1l1 10 3-10c2-1 4 0 3 2l-1 9 4-6c2 0 3 1 2 3l-5 13c-2 5-11 6-15 1z" fill="#e8eef2" stroke="#75828e" />
        </Icon>
      </button>
      <button aria-label="Zoom" className="mt-4">
        <Icon>
          <circle cx="11" cy="13" r="9" fill="#e8eef2" stroke="#75828e" />
          <path d="M17 20l9 9" stroke="#75828e" strokeWidth="4" />
          <path d="M27 2v9M22 6h10M22 13h10" stroke="#75828e" />
        </Icon>
      </button>
      <Caret className="w-3 h-[6px] mt-3" color="#8898a8" />
      <button aria-label="Orbit" className="mt-4">
        <Icon>
          <path d="M9 12c-6 1-8 3-8 5s4 4 8 5M18 10c8 1 12 4 13 7-1 3-6 5-13 6" stroke="#75828e" />
          <path d="M8 11c1-8 10-9 11-1M9 22c0 8 9 9 10 1V13" stroke="#75828e" />
          <path d="M10 17h8M14 13v8M21 11v6M18 14h6M24 16v4" stroke="#c07ca4" />
        </Icon>
      </button>
      <Caret className="w-3 h-[6px] mt-4" color="#8898a8" />
      <button aria-label="Look at" className="mt-4">
        <Icon>
          <path d="M2 10L8 4v3h15l4-4-1 7" stroke="#75828e" />
          <path d="M1 11h30v19H1z" fill="#e9e57c" stroke="#75828e" />
          <path d="M7 17h18v7H7z" fill="#d8dee2" stroke="#75828e" />
        </Icon>
      </button>
      <button aria-label="Zoom all" className="mt-4">
        <Icon>
          <circle cx="13" cy="13" r="11" fill="#e8eef2" stroke="#75828e" />
          <path d="M9 7h6l4 4v9H9z" fill="#fff" stroke="#75828e" />
          <path d="M21 22l9 8" stroke="#75828e" strokeWidth="4" />
        </Icon>
      </button>
      <button aria-label="Navigation options" className="self-end mt-auto mb-1 mr-1">
        <Icon className="w-4 h-4"><circle cx="16" cy="16" r="13" stroke="#8696a6" strokeWidth="4" /><path d="M10 16h12" stroke="#8696a6" strokeWidth="4" /></Icon>
      </button>
    </div>
  )
}

function Viewport() {
  return (
    <main className="relative flex-1 min-w-0 overflow-hidden bg-linear-to-b from-[#c1dbf9] to-[#c5def7] text-xl">
      <div className="absolute inset-0"><Scene /></div>
      <div className="absolute right-[1px] top-[13px] flex items-center gap-4">
        <button aria-label="Minimize document"><Icon className="w-6 h-6"><path d="M2 16h28v7H2z" fill="#fff" stroke="#4c5a68" strokeWidth="3" /></Icon></button>
        <button aria-label="Restore document"><Icon className="w-6 h-6"><path d="M9 8V2h21v22h-6" fill="#fff" stroke="#4c5a68" strokeWidth="3" /><path d="M3 8h20v21H3z" fill="#fff" stroke="#4c5a68" strokeWidth="3" /><path d="M10 15h6v7h-6z" stroke="#4c5a68" strokeWidth="3" /></Icon></button>
        <button aria-label="Close document"><Icon className="w-6 h-6"><path d="M3 5h8l5 6 5-6h8l-8 11 8 11h-8l-5-6-5 6H3l8-11z" fill="#fff" stroke="#4c5a68" strokeWidth="3" /></Icon></button>
      </div>
      <button className="absolute right-[58px] top-[109px] w-[92px] h-[92px] p-4 border-2 border-[#8796a8] bg-[#cfdce6] text-[#8593a6] font-semibold">
        <span className="flex justify-center items-center w-full h-full bg-[#c7d5e1]">TOP</span>
      </button>
      <NavigationBar />
      <MarkingMenu />
      <ContextMenu />
    </main>
  )
}

/* ---------- status bar ---------- */

function StatusBar() {
  return (
    <footer className="flex items-center h-[53px] pt-1 border-b-[3px] border-[#111] bg-linear-to-b from-[#f8f8f8] to-[#bcbcbc] text-[23px] text-[#2b2b2b]">
      <span className="flex-1 pl-px">Select geometry to dimension</span>
      <div className="flex items-center gap-[17px] w-[519px] h-10 pl-[13px] border-l-2 border-[#dedede]">
        <button aria-label="Snap to grid">
          <Icon>
            <path d="M3 2h24v23H3zM11 2v23M19 2v23M3 10h24M3 18h24" />
            <path d="M17 31v-8c0-8 13-8 13 0v8" stroke="#c41c28" strokeWidth="4" />
          </Icon>
        </button>
        <button aria-label="Show all constraints">
          <Icon>
            <path d="M2 3h28v18H18l-8 6v-6H2z" fill="#eef0f2" />
            <path d="M10 13l4 4 6-9" />
            <circle cx="26" cy="21" r="5" fill="#fbe27a" stroke="#b0903a" /><path d="M26 26v5" stroke="#b0903a" strokeWidth="3" />
          </Icon>
        </button>
        <button aria-label="Dimension display" className="flex items-center gap-[10px]">
          <Icon>
            <path d="M3 7h8M7 3v8M12 12l6-10M20 10h7" stroke="#222" />
            <path d="M2 16v15M30 16v15M4 22h24" />
            <path d="M3 22l7-4v8zM29 22l-7-4v8z" fill="#333" stroke="none" />
          </Icon>
          <Caret className="w-2 h-[6px]" />
        </button>
        <button aria-label="Slice graphics">
          <Icon>
            <path d="M2 17l6-6h14v15l-5 4H2z" fill="#f8df3a" stroke="#34506e" />
            <path d="M2 17h15v13M17 17l13-15v18L17 30z" fill="#a8c8ee" stroke="#2a4a96" />
            <path d="M3 18h13v11H3z" fill="#fbe22c" stroke="none" />
          </Icon>
        </button>
        <button aria-label="Degrees of freedom">
          <Icon>
            <path d="M11 2v18M2 11h18" stroke="#d01c28" strokeWidth="3" />
            <path d="M11 0l4 5H7zM11 22l4-5H7zM0 11l5-4v8zM22 11l-5-4v8z" fill="#d01c28" stroke="none" />
            <circle cx="25" cy="19" r="5" fill="#fbe27a" stroke="#b0903a" /><path d="M25 25v6" stroke="#b0903a" strokeWidth="3" />
          </Icon>
        </button>
      </div>
      <span className="w-[236px] pl-2 border-l-2 border-[#dedede] whitespace-nowrap">0.000 mm, 0.000 mm</span>
      <span className="w-[241px] pl-2 border-l-2 border-[#dedede] whitespace-nowrap">6 dimensions needed</span>
      <span className="w-[75px] pl-3 border-l-2 border-[#dedede]">1</span>
      <span className="w-[75px] pl-[14px] border-l-2 border-[#dedede]">1</span>
    </footer>
  )
}

export default function App() {
  return (
    <div className="flex flex-col min-h-screen border-l-[3px] border-r-[3px] border-l-[#12418f] border-r-[#6f7f86] bg-[#f0f0f0] font-['Open_Sans','Noto_Sans',sans-serif] text-[22px] leading-7 text-[#444]">
      <Header />
      <Ribbon />
      <div className="flex flex-1">
        <Browser />
        <Viewport />
      </div>
      <StatusBar />
    </div>
  )
}
